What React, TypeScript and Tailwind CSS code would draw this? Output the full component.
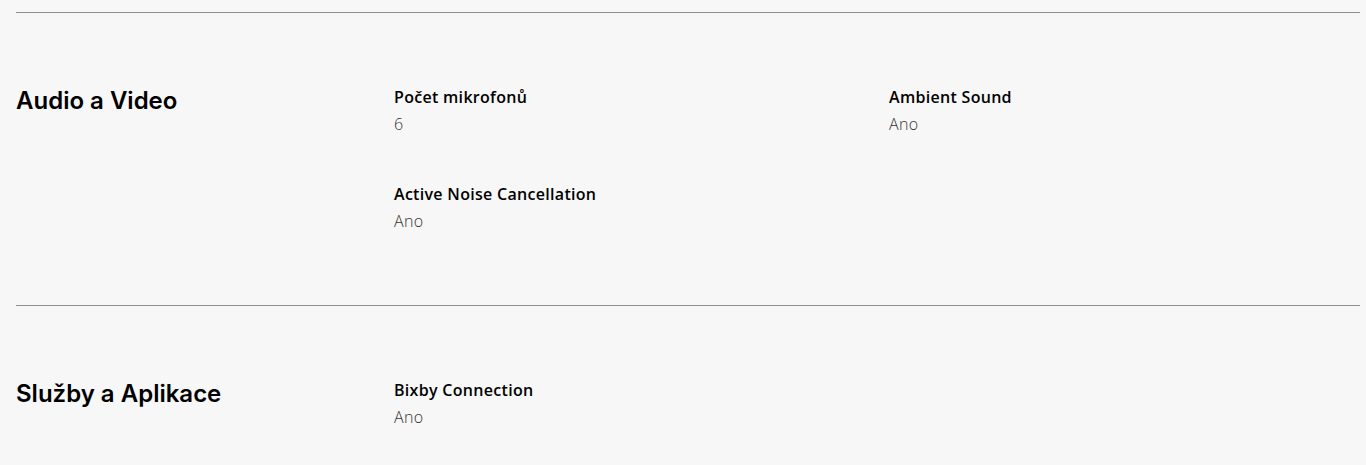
const sections = [
	{
		title: "Audio a Video",
		items: [
			{ label: "Počet mikrofonů", value: "6" },
			{ label: "Ambient Sound", value: "Ano" },
			{ label: "Active Noise Cancellation", value: "Ano" },
		],
	},
	{
		title: "Služby a Aplikace",
		items: [{ label: "Bixby Connection", value: "Ano" }],
	},
];

export default function App() {
	return (
		<div className="min-h-[465px] bg-[#f7f7f7] pl-4 pr-[6px] pt-3">
			{sections.map((s) => (
				<section className="flex border-t border-[#8f8f8f] pt-[72px] pb-[72px]" key={s.title}>
					<h2 className="w-[378px] shrink-0 pt-[2px] font-['Inter',sans-serif] text-[24px] leading-7 font-semibold text-black">
						{s.title}
					</h2>
					<dl className="grid flex-1 grid-cols-[495px_1fr] gap-y-[46px]">
						{s.items.map((it) => (
							<div key={it.label}>
								<dt className="font-['Open_Sans',sans-serif] text-base leading-6 font-semibold tracking-[0.3px] text-black">
									{it.label}
								</dt>
								<dd className="mt-[3px] font-['Open_Sans',sans-serif] text-base leading-6 font-light tracking-[0.3px] text-[#333]">
									{it.value}
								</dd>
							</div>
						))}
					</dl>
				</section>
			))}
		</div>
	);
}
